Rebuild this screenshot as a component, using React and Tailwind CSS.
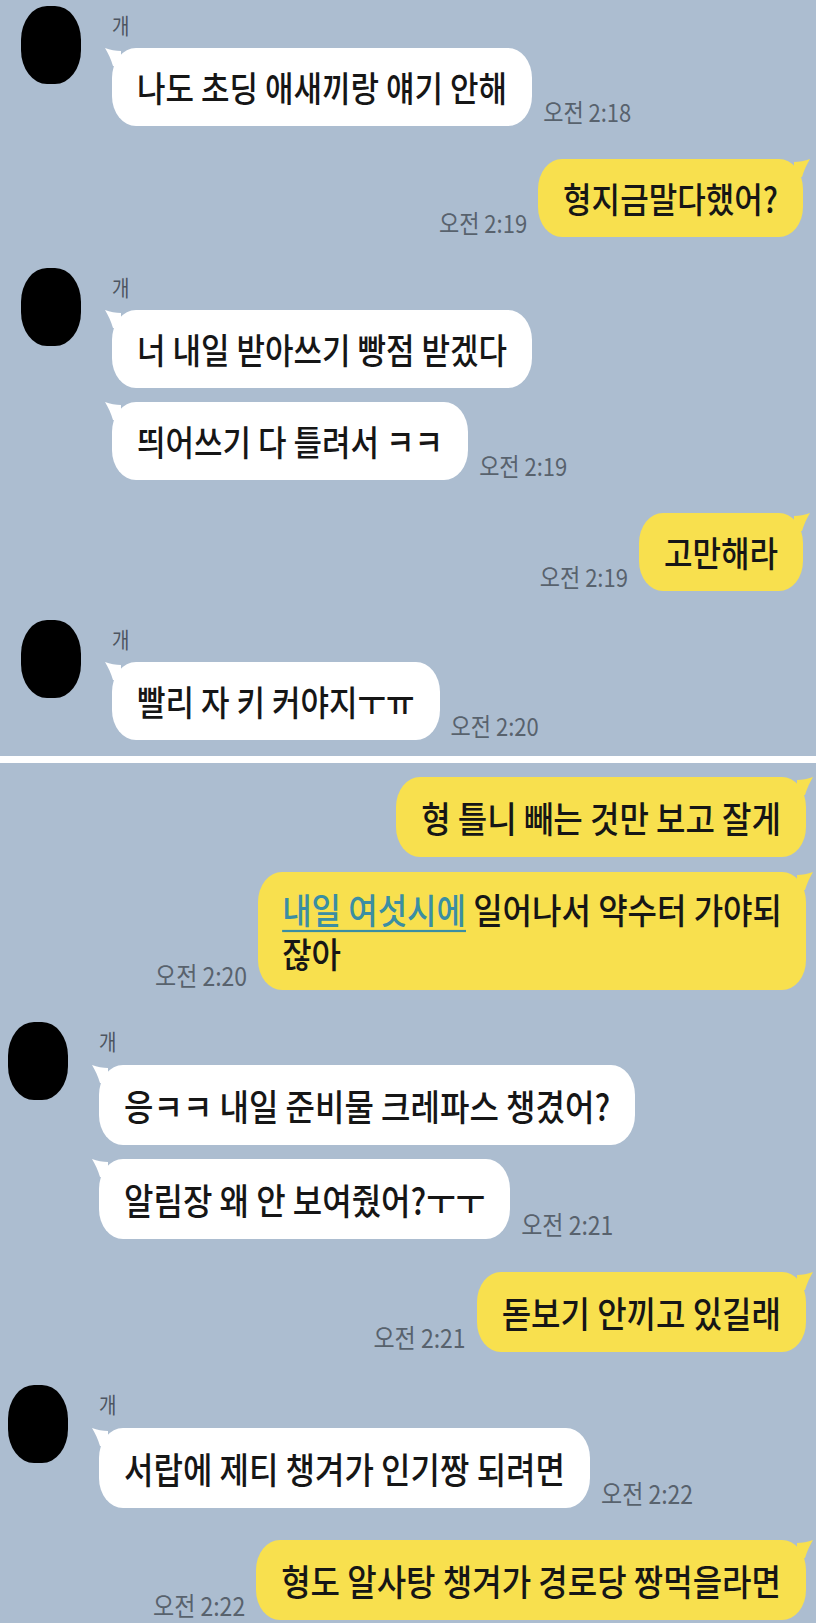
import React from "react";

const FONT = { fontFamily: '"Noto Sans CJK KR", "Noto Sans", sans-serif' };

function Avatar() {
  return <div className="w-[60px] h-[78px] shrink-0 bg-black rounded-[26px_/_34px]" />;
}

function Tail({ color, side }) {
  return (
    <svg
      width="16"
      height="18"
      viewBox="0 0 16 18"
      className={`absolute top-0 ${side === "left" ? "-left-[7px]" : "-right-[7px] -scale-x-100"}`}
    >
      <path d="M16 3 C11 3 5 2 0 0 C3 5 6 11 8 18 L16 18 Z" fill={color} />
    </svg>
  );
}

function Txt({ children, className = "" }) {
  return <span className={`inline-block scale-y-[1.12] ${className}`}>{children}</span>;
}

function Time({ children, big }) {
  return (
    <div
      className={`${big ? "text-[23px]" : "text-[22px]"} leading-[24px] text-[#58626d] whitespace-nowrap pb-[3px]`}
    >
      <Txt>{children}</Txt>
    </div>
  );
}

// panel 2 is cropped a bit bigger than panel 1, so its bubbles run a size up
function Bubble({ children, mine, big }) {
  const bg = mine ? "#f8e04e" : "#ffffff";
  return (
    <div
      className={`relative px-[25px] rounded-[24px_/_30px] font-medium text-[#161616] whitespace-nowrap ${
        big ? "py-[21px] text-[32px] leading-[38px]" : "py-[20px] text-[31px] leading-[38px]"
      } ${mine ? "bg-[#f8e04e]" : "bg-white"}`}
    >
      <Tail color={bg} side={mine ? "right" : "left"} />
      <Txt className="relative">{children}</Txt>
    </div>
  );
}

function Left({ msgs, time, big, className = "" }) {
  return (
    <div className={`flex ${className}`}>
      <Avatar />
      <div className="ml-[31px] flex flex-col">
        <div className={`${big ? "h-[43px]" : "h-[42px]"} pt-[8px] text-[19px] leading-[22px] text-[#4d5561]`}>
          <Txt>개</Txt>
        </div>
        <div className="flex flex-col gap-[14px]">
          {msgs.map((m, i) => (
            <div key={i} className="flex items-end gap-[11px]">
              <Bubble big={big}>{m}</Bubble>
              {i === msgs.length - 1 && <Time big={big}>{time}</Time>}
            </div>
          ))}
        </div>
      </div>
    </div>
  );
}

function Right({ children, time, big, className = "" }) {
  return (
    <div className={`flex items-end justify-end gap-[11px] ${className}`}>
      {time && <Time big={big}>{time}</Time>}
      <Bubble mine big={big}>
        {children}
      </Bubble>
    </div>
  );
}

export default function App() {
  return (
    <div className="w-[816px] h-[1623px] overflow-hidden bg-white" style={FONT}>
      {/* first screenshot */}
      <div className="h-[756px] bg-[#acbdd0] pt-[6px] pl-[21px] pr-[13px]">
        <Left msgs={["나도 초딩 애새끼랑 얘기 안해"]} time="오전 2:18" />
        <Right time="오전 2:19" className="mt-[33px]">
          형지금말다했어?
        </Right>
        <Left
          className="mt-[31px]"
          msgs={["너 내일 받아쓰기 빵점 받겠다", "띄어쓰기 다 틀려서 ㅋㅋ"]}
          time="오전 2:19"
        />
        <Right time="오전 2:19" className="mt-[33px]">
          고만해라
        </Right>
        <Left className="mt-[29px]" msgs={["빨리 자 키 커야지ㅜㅠ"]} time="오전 2:20" />
      </div>

      {/* second screenshot */}
      <div className="mt-[7px] h-[860px] bg-[#acbdd0] pt-[14px] pl-[8px] pr-[10px]">
        <Right big>형 틀니 빼는 것만 보고 잘게</Right>
        <div className="mt-[15px] flex items-end justify-end gap-[11px]">
          <Time big>오전 2:20</Time>
          <div className="relative px-[24px] py-[19px] rounded-[24px_/_30px] bg-[#f8e04e] font-medium text-[32px] leading-[40px] text-[#161616] whitespace-nowrap">
            <Tail color="#f8e04e" side="right" />
            <span className="relative inline-block scale-y-[1.1]">
              <span className="text-[#3b8ea3] underline decoration-[2px] underline-offset-[5px]">내일 여섯시에</span> 일어나서 약수터 가야되
              <br />
              잖아
            </span>
          </div>
        </div>
        <Left
          big
          className="mt-[32px]"
          msgs={["응ㅋㅋ 내일 준비물 크레파스 챙겼어?", "알림장 왜 안 보여줬어?ㅜㅜ"]}
          time="오전 2:21"
        />
        <Right big time="오전 2:21" className="mt-[33px]">
          돋보기 안끼고 있길래
        </Right>
        <Left big className="mt-[33px]" msgs={["서랍에 제티 챙겨가 인기짱 되려면"]} time="오전 2:22" />
        <Right big time="오전 2:22" className="mt-[32px]">
          형도 알사탕 챙겨가 경로당 짱먹을라면
        </Right>
      </div>
    </div>
  );
}
